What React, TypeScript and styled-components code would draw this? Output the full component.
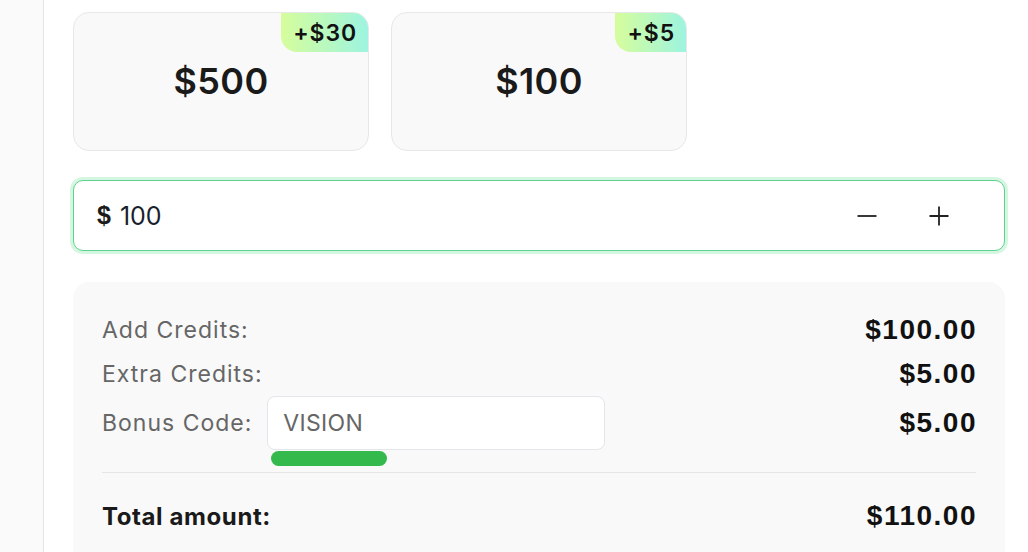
import React from "react";
import styled, { createGlobalStyle } from "styled-components";

const Global = createGlobalStyle`
  html, body { margin: 0; padding: 0; background: #ffffff; }
  body { font-family: Inter, "Noto Sans", sans-serif; color: #111; }
`;

const Page = styled.div`
  display: flex;
  width: 1028px;
  height: 552px;
  overflow: hidden;
`;

const Sidebar = styled.aside`
  width: 43px;
  flex: none;
  background: #fafafa;
  border-right: 1px solid #e6e6e6;
`;

const Main = styled.main`
  flex: 1;
  padding: 12px 23px 0 29px;
  display: flex;
  flex-direction: column;
  min-height: 0;
`;

const Cards = styled.div`
  display: flex;
  gap: 22px;
  flex: none;
`;

const Card = styled.div`
  position: relative;
  width: 296px;
  height: 139px;
  box-sizing: border-box;
  border: 1px solid #e8e8e8;
  border-radius: 16px;
  background: #f9f9f9;
  display: flex;
  justify-content: center;
  padding-top: 47px;
  overflow: hidden;
`;

const Amount = styled.div`
  font-family: Inter, sans-serif;
  font-size: 36px;
  font-weight: 600;
  line-height: 42px;
  letter-spacing: 0.4px;
  color: #1a1a1a;
`;

const Badge = styled.div`
  position: absolute;
  top: 0;
  right: 0;
  height: 39px;
  padding: 0 11px 0 12px;
  display: flex;
  align-items: center;
  border-bottom-left-radius: 16px;
  background: linear-gradient(90deg, #d6fd9c 0%, #9df4e0 100%);
  font-family: Inter, sans-serif;
  font-size: 23px;
  font-weight: 600;
  letter-spacing: 0.9px;
  color: #111;
`;

const AmountField = styled.div`
  flex: none;
  margin-top: 29px;
  height: 71px;
  box-sizing: border-box;
  border: 1.5px solid #5dd28e;
  border-radius: 10px;
  box-shadow: 0 0 0 3px #d5f6e1;
  background: #fff;
  display: flex;
  align-items: center;
  padding: 0 53px 0 23px;
`;

const Dollar = styled.span`
  font-family: "Liberation Sans", sans-serif;
  font-weight: 700;
  font-size: 25px;
  color: #1a1a1a;
  margin-right: 9px;
`;

const AmountValue = styled.span`
  flex: 1;
  font-family: Inter, sans-serif;
  font-size: 25px;
  color: #1a1f2e;
`;

const Stepper = styled.div`
  display: flex;
  gap: 48px;
  align-items: center;
`;

const StepButton = styled.button`
  border: none;
  background: none;
  padding: 0;
  width: 24px;
  height: 24px;
  display: flex;
  align-items: center;
  justify-content: center;
  color: #222;
  cursor: pointer;
`;

const Summary = styled.section`
  flex: none;
  margin-top: 31px;
  height: 300px;
  box-sizing: border-box;
  background: #f9f9f9;
  border-radius: 16px 16px 0 0;
  padding: 26px 29px 0 29px;
`;

const Row = styled.div<{ $h: number }>`
  display: flex;
  align-items: center;
  justify-content: space-between;
  height: ${(p) => p.$h}px;
`;

const Label = styled.span`
  font-family: Inter, sans-serif;
  font-size: 23px;
  letter-spacing: 1px;
  color: #666;
`;

const Value = styled.span`
  font-family: "Liberation Sans", sans-serif;
  font-weight: 700;
  font-size: 28px;
  letter-spacing: 1.5px;
  margin-right: -1px;
  color: #111;
`;

const CodeGroup = styled.div`
  display: flex;
  align-items: center;
  gap: 15px;
`;

const CodeWrap = styled.div`
  position: relative;
`;

const CodeInput = styled.div`
  width: 338px;
  height: 54px;
  box-sizing: border-box;
  background: #fff;
  border: 1px solid #e3e6ea;
  border-radius: 8px;
  display: flex;
  align-items: center;
  padding-left: 15px;
  font-family: Inter, sans-serif;
  font-size: 23px;
  letter-spacing: 0.3px;
  color: #666;
`;

const Strength = styled.div`
  position: absolute;
  left: 4px;
  top: 55px;
  width: 116px;
  height: 15px;
  border-radius: 8px;
  background: #34b94c;
`;

const Divider = styled.hr`
  border: none;
  border-top: 1px solid #e6e6e6;
  margin: 22px 0 0 0;
`;

const TotalLabel = styled.span`
  font-family: Inter, sans-serif;
  font-weight: 700;
  font-size: 24px;
  letter-spacing: 0.6px;
  color: #1a1a1a;
`;

const packs = [
  { amount: "$500", bonus: "+$30" },
  { amount: "$100", bonus: "+$5" },
];

export default function App() {
  return (
    <>
      <Global />
      <Page>
        <Sidebar />
        <Main>
          <Cards>
            {packs.map((p) => (
              <Card key={p.amount}>
                <Badge>{p.bonus}</Badge>
                <Amount>{p.amount}</Amount>
              </Card>
            ))}
          </Cards>
          <AmountField>
            <Dollar>$</Dollar>
            <AmountValue>100</AmountValue>
            <Stepper>
              <StepButton aria-label="decrease">
                <svg width="20" height="20" viewBox="0 0 20 20">
                  <path d="M0.5 10h19" stroke="currentColor" strokeWidth="1.8" />
                </svg>
              </StepButton>
              <StepButton aria-label="increase">
                <svg width="20" height="20" viewBox="0 0 20 20">
                  <path d="M0.5 10h19M10 0.5v19" stroke="currentColor" strokeWidth="1.8" />
                </svg>
              </StepButton>
            </Stepper>
          </AmountField>
          <Summary>
            <Row $h={44}>
              <Label>Add Credits:</Label>
              <Value>$100.00</Value>
            </Row>
            <Row $h={44}>
              <Label>Extra Credits:</Label>
              <Value>$5.00</Value>
            </Row>
            <Row $h={54}>
              <CodeGroup>
                <Label>Bonus Code:</Label>
                <CodeWrap>
                  <CodeInput>VISION</CodeInput>
                  <Strength />
                </CodeWrap>
              </CodeGroup>
              <Value>$5.00</Value>
            </Row>
            <Divider />
            <Row $h={86}>
              <TotalLabel>Total amount:</TotalLabel>
              <Value>$110.00</Value>
            </Row>
          </Summary>
        </Main>
      </Page>
    </>
  );
}
